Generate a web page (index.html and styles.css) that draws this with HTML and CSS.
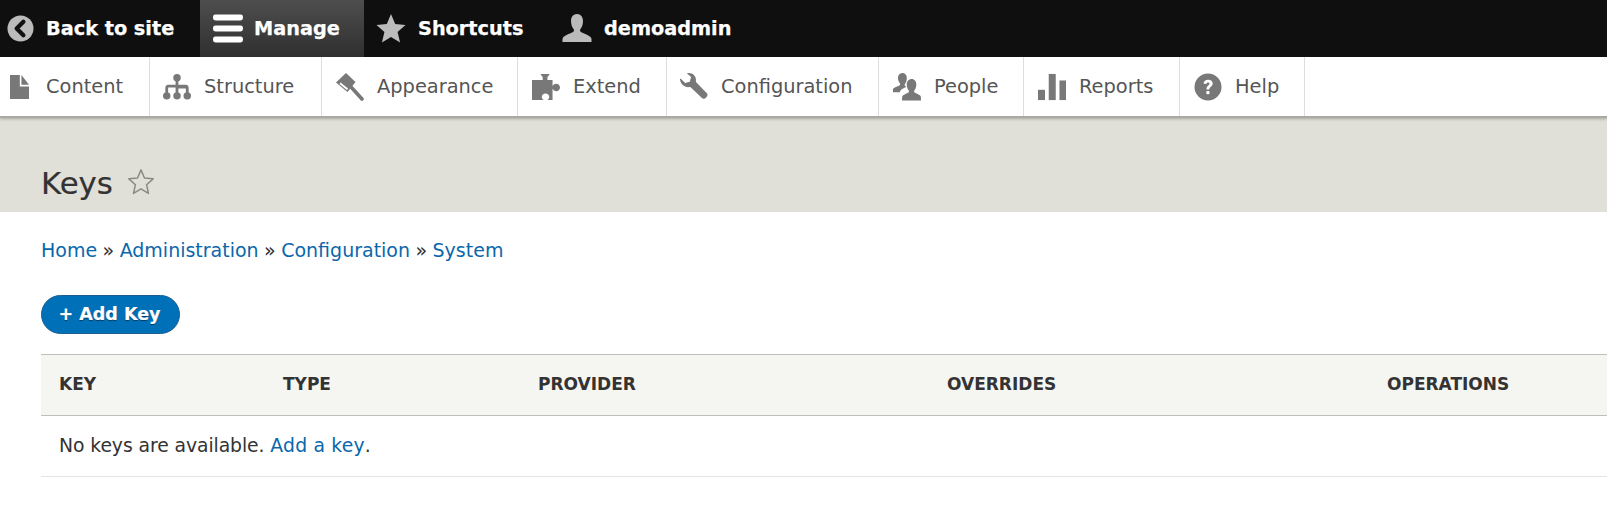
FILE: index.html
```html
<!DOCTYPE html>
<html lang="en">
<head>
<meta charset="utf-8">
<title>Keys</title>
<link rel="stylesheet" href="styles.css">
</head>
<body>
<nav class="bar">
  <a class="bar-item back"><svg class="bar-icon" viewBox="0 0 28 28"><circle cx="14" cy="14" r="13.5" fill="#bbb"/><path d="M17 7l-7 7 7 7" fill="none" stroke="#111" stroke-width="4.4" stroke-linecap="round" stroke-linejoin="round"/></svg>Back to site</a>
  <a class="bar-item manage"><svg class="bar-icon wide" viewBox="0 0 30 28"><g fill="#fff"><rect y="0" width="30" height="6" rx="2.4"/><rect y="11" width="30" height="6" rx="2.4"/><rect y="22" width="30" height="6" rx="2.4"/></g></svg>Manage</a>
  <a class="bar-item shortcuts"><svg class="bar-icon wide" viewBox="0 0 30 30"><path fill="#bbb" d="M15 0l4.300 10.400 10.700.9-8.200 7.200 2.600 11.100L15 23.700 5.600 29.600l2.600-11.100L0 11.300l10.700-.9z"/></svg>Shortcuts</a>
  <a class="bar-item user"><svg class="bar-icon wide" viewBox="0 0 30 30"><path fill="#bbb" d="M15 0c4 0 6.200 3 6.200 7.200 0 3.800-1.500 7-2.600 8.300-.8 1-.6 2.700.8 3.400 3.400 1.600 8.800 3.300 10.300 6 .5 1 .3 4.100.3 4.100H0s-.2-3.100.3-4.100c1.500-2.700 6.900-4.400 10.300-6 1.400-.7 1.600-2.400.8-3.400-1.100-1.300-2.600-4.500-2.600-8.300C8.800 3 11 0 15 0z"/></svg>demoadmin</a>
</nav>
<nav class="tray">
  <a class="tab t-content"><svg class="tab-icon page" viewBox="0 0 58 73"><path fill="#787878" d="M0 0h30v35h28v38H0z"/><path fill="#787878" d="M35 0l23 30H35z"/></svg>Content</a>
  <a class="tab t-structure"><svg class="tab-icon" viewBox="0 0 30 28"><g fill="#787878"><circle cx="15" cy="4" r="4"/><circle cx="4" cy="23.500" r="4"/><circle cx="15" cy="23.500" r="4"/><circle cx="26" cy="23.500" r="4"/><path d="M13.500 6h3v5.500h8a3.500 3.500 0 0 1 3 3.500v7h-3v-6.500h-8V21h-3v-6.500h-8V21h-3v-6a3.500 3.500 0 0 1 3-3.500h8z"/></g></svg>Structure</a>
  <a class="tab t-appearance"><svg class="tab-icon" viewBox="0 0 28 28"><path fill="#787878" d="M0 9.500L10 0l9.500 9-8 10z"/><path fill="none" stroke="#fff" stroke-width="1.800" d="M4 10.200l7.500 6"/><path fill="none" stroke="#787878" stroke-width="3.600" stroke-linecap="round" d="M15 14l11 12"/></svg>Appearance</a>
  <a class="tab t-extend"><svg class="tab-icon" viewBox="0 0 30 28"><path fill="#787878" d="M9 0h10l-2.500 3.500v3H22v6.500c1-1.800 2.500-2.500 4-2.500 2 0 4 1.700 4 4s-2 4-4 4c-1.500 0-3-.7-4-2.500V28h-5.500c1.500-1 2-2.500 2-3.500 0-2-1.800-3.500-4-3.500s-4 1.500-4 3.500c0 1 .5 2.500 2 3.500H0V6.500h11.500v-3z"/></svg>Extend</a>
  <a class="tab t-config"><svg class="tab-icon" viewBox="0 0 30 30"><path fill="#787878" d="M9.500 0c4.500 0 8 3.500 7.500 8-.1 1 0 1.500.6 2.100l11.200 11.500c2.500 2.600-2.700 7.900-5.300 5.300L12 15.700c-.6-.6-1.200-.7-2.100-.6C4.500 15.700.5 11.500 0 7c-.1-.8.700-1 1.200-.5l4.300 4.200 5-1.400 1.400-4.900-4.100-3.500C7.300.4 8 0 9.500 0z"/></svg>Configuration</a>
  <a class="tab t-people"><svg class="tab-icon" viewBox="0 0 30 30"><g fill="#787878"><path d="M10 0c3 0 4.800 2.300 4.800 5.500 0 2.600-1 5-1.900 6.100-.6.700-.5 1.800.3 2.400l1 .7c-1.400.8-4.300 2-5.700 3.500-.6.600-1 1.400-1.100 2.300H0v-3c0-1.200 4.600-2.900 6.800-4 1-.6 1.100-1.700.5-2.500-.9-1.100-2-3.300-2-5.700C5.300 2.300 7 0 10 0z"/><path d="M20 6.500c3 0 5 2.500 5 5.800 0 2.700-1.100 5.200-2 6.300-.6.800-.5 2 .5 2.500 2.400 1.200 5.600 2.300 6.200 3.900.3.800.3 4.500.3 4.500H9.700s0-3.700.3-4.500c.600-1.600 3.800-2.700 6.200-3.900 1-.5 1.100-1.700.5-2.500-.9-1.100-2-3.600-2-6.300 0-3.300 2.300-5.800 5.300-5.800z"/></g></svg>People</a>
  <a class="tab t-reports"><svg class="tab-icon" viewBox="0 0 30 28"><g fill="#787878"><rect y="17" width="7.500" height="11"/><rect x="11.500" y="0" width="7.500" height="28"/><rect x="23" y="7" width="7" height="21"/></g></svg>Reports</a>
  <a class="tab t-help"><svg class="tab-icon" viewBox="0 0 28 28"><circle cx="14" cy="14" r="13.500" fill="#787878"/><path d="M9.500 10.500c.3-2.500 2-3.800 4.600-3.800 2.800 0 4.600 1.600 4.600 3.800 0 3.100-3.400 3.300-3.400 6h-2.900c0-3.800 3.100-4 3.100-5.700 0-.9-.6-1.400-1.500-1.400s-1.500.6-1.700 1.700z" fill="#fff"/><rect x="12.300" y="18" width="3.200" height="3.200" rx="1" fill="#fff"/></svg>Help</a>
</nav>
<header class="page-head">
  <h1 class="title">Keys</h1>
  <svg class="fav" viewBox="0 0 30 30"><path fill="none" stroke="#8a8a80" stroke-width="1.600" stroke-linejoin="round" d="M15 2l3.700 8.700 9.300.9-7 6.300 2 9.300-8-4.900-8 4.900 2-9.300-7-6.300 9.300-.9z"/></svg>
</header>
<main class="content">
  <div class="crumbs"><a>Home</a> » <a>Administration</a> » <a>Configuration</a> » <a>System</a></div>
  <a class="btn">+ Add Key</a>
  <table class="keys">
    <colgroup><col class="c1"><col class="c2"><col class="c3"><col class="c4"><col></colgroup>
    <thead><tr><th>Key</th><th>Type</th><th>Provider</th><th>Overrides</th><th>Operations</th></tr></thead>
    <tbody><tr><td colspan="5">No keys are available. <a>Add a key</a>.</td></tr></tbody>
  </table>
</main>
</body>
</html>
```
FILE: styles.css
```css
* { box-sizing: border-box; }
html, body { margin: 0; padding: 0; background: #fff; }
body { font-family: "DejaVu Sans", sans-serif; color: #333; overflow: hidden; }
a { color: inherit; text-decoration: none; }

.bar { display: flex; height: 57px; background: #0f0f0f; color: #fff; font-weight: 700; font-size: 19.3px; -webkit-text-stroke: .25px #fff; }
.bar-item { display: flex; align-items: center; height: 57px; }
.bar-icon { width: 27px; height: 27px; margin-right: 12px; }
.bar-icon.wide { width: 30px; height: 29px; }
.back { width: 200px; padding-left: 7px; }
.manage { width: 164px; padding-left: 13px; background: linear-gradient(#4e4e4e, #2f2f2f); }
.manage .bar-icon { margin-right: 11px; }
.shortcuts { width: 184px; padding-left: 12px; }
.user { padding-left: 14px; }

.tray { position: relative; display: flex; height: 59px; background: #fff; color: #555; font-size: 19.4px; box-shadow: 0 2px 0 #aaa9a4, 0 3px 3px rgba(0,0,0,.25); }
.tab { display: flex; align-items: center; border-right: 1px solid #ddd; height: 59px; padding-left: 13px; }
.tab-icon { width: 28px; height: 28px; margin-right: 13px; }
.tab-icon.page { width: 19px; height: 24px; margin-right: 17px; }
.t-content { width: 150px; padding-left: 10px; }
.t-structure { width: 172px; }
.t-appearance { width: 196px; padding-left: 14px; }
.t-extend { width: 149px; padding-left: 14px; }
.t-config { width: 212px; }
.t-people { width: 145px; padding-left: 14px; }
.t-reports { width: 156px; padding-left: 14px; }
.t-help { width: 125px; padding-left: 14px; }

.page-head { display: flex; align-items: center; height: 96px; background: #e0e0d8; padding: 35px 0 0 41px; }
.title { margin: 0; padding-top: 2px; font-size: 30.8px; font-weight: 400; color: #333; -webkit-text-stroke: .2px #333; }
.fav { width: 28px; height: 28px; margin-left: 14px; }

.content { padding: 26px 0 0 41px; }
.crumbs { font-size: 19px; line-height: 24px; color: #333; word-spacing: -.6px; }
.crumbs a, .keys a { color: #0b67ab; }
.btn { display: block; width: 139px; height: 39px; margin-top: 33px; padding-right: 2px; border-radius: 20px; background: #0071b8; border: 1px solid #1b5d8f; color: #fff; font-weight: 700; font-size: 17.5px; line-height: 37px; text-align: center; text-shadow: 0 1px 1px rgba(0,0,0,.5); -webkit-text-stroke: .2px #fff; }

.keys { width: 100%; margin-top: 20px; border-collapse: collapse; table-layout: fixed; font-size: 18.8px; }
.c1 { width: 224px; } .c2 { width: 255px; } .c3 { width: 409px; } .c4 { width: 440px; }
.keys th { height: 61px; padding: 0 0 2px 18px; text-align: left; font-size: 17px; font-weight: 700; text-transform: uppercase; background: #f5f5f2; border-top: 1px solid #bfbfba; border-bottom: 1px solid #bfbfba; }
.keys td { height: 61px; padding: 0 0 2px 18px; border-bottom: 1px solid #e6e4df; letter-spacing: -.08px; }
.keys td a { letter-spacing: .2px; }
```
